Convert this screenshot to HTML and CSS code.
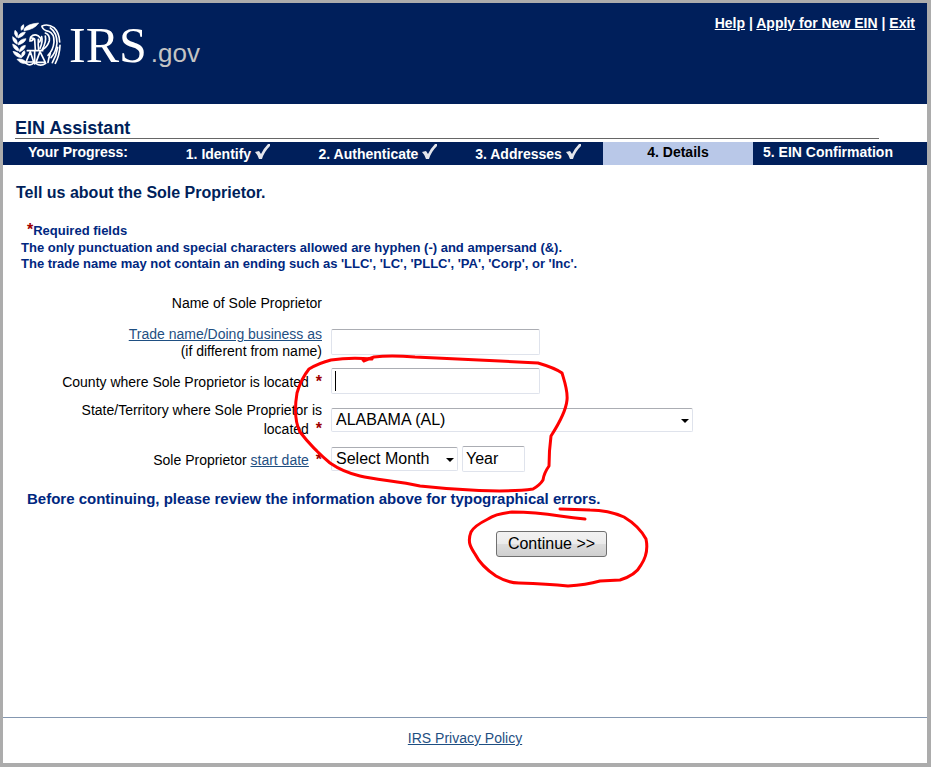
FILE: index.html
```html
<!DOCTYPE html>
<html lang="en">
<head>
  <meta charset="utf-8">
  <title>EIN Assistant</title>
  <link rel="stylesheet" href="styles.css">
</head>
<body>
  <header class="site-header">
    <a class="logo" href="#">
      <svg class="eagle" viewBox="36 66 150 135" aria-hidden="true">
        <g fill="#fff" stroke="#fff" stroke-width="2">
          <path d="M64 91 Q60 78 71 74 Q75 84 64 91Z"/>
          <path d="M72 88 Q80 72 116 69 Q104 88 72 92Z"/>
          <path d="M50 112 Q40 102 45 91 Q56 98 52 112Z"/>
          <path d="M54 112 Q58 97 76 96 Q72 109 54 114Z"/>
          <path d="M50 132 Q36 124 38 110 Q54 118 52 132Z"/>
          <path d="M54 133 Q58 117 78 116 Q75 129 54 135Z"/>
          <path d="M54 153 Q39 147 38 132 Q54 138 57 151Z"/>
          <path d="M58 154 Q60 138 76 136 Q77 147 58 156Z"/>
          <path d="M64 173 Q45 171 39 154 Q55 156 66 170Z"/>
          <path d="M65 170 Q63 157 73 152 Q80 161 65 172Z"/>
          <path d="M82 190 Q63 194 51 178 Q68 173 82 190Z"/>
        </g>
        <g fill="none" stroke="#fff" stroke-width="5" stroke-linecap="round" stroke-linejoin="round">
          <path d="M90 119 L92 111 Q102 101 114 107 L123 116 L119 126 M92 113 L102 116"/>
          <path d="M104 117 L106 150 M89 123 Q98 123 101 116 M115 118 Q114 134 116 150"/>
          <path d="M82 152 H128 M104 152 V192"/>
          <path d="M91 155 L78 186 H101 L91 155 M120 155 L108 187 H136 L120 155"/>
          <path d="M78 190 Q91 200 102 188 M107 190 Q122 201 137 190"/>
          <path d="M126 78 Q144 70 162 83 Q178 98 179 126"/>
          <path d="M126 80 Q130 91 146 94 Q163 101 162 126 Q160 150 144 166"/>
          <path d="M136 99 Q150 104 148 122 Q143 139 130 147 M151 84 Q171 98 171 129 Q168 157 153 173"/>
          <path d="M125 110 Q129 124 120 145 M136 108 Q140 125 126 150"/>
          <path d="M180 136 Q179 166 166 190 M173 142 Q169 168 157 188 M151 160 Q146 175 144 187"/>
        </g>
      </svg>
      <span class="logo-irs">IRS</span><span class="logo-gov">.gov</span>
    </a>
    <nav class="top-links">
      <a href="#">Help</a> | <a href="#">Apply for New EIN</a> | <a href="#">Exit</a>
    </nav>
  </header>

  <h1>EIN Assistant</h1>

  <ol class="progress">
    <li>Your Progress:</li>
    <li class="done">1. Identify <svg class="check" viewBox="0 0 15 16"><path d="M0 8 L4 7 L6 10 Q9 4 13 0 L15 0 L15 2 Q9 8 7 15 L4 15 Q3 11 0 8Z"/></svg></li>
    <li class="done">2. Authenticate <svg class="check" viewBox="0 0 15 16"><path d="M0 8 L4 7 L6 10 Q9 4 13 0 L15 0 L15 2 Q9 8 7 15 L4 15 Q3 11 0 8Z"/></svg></li>
    <li class="done">3. Addresses <svg class="check" viewBox="0 0 15 16"><path d="M0 8 L4 7 L6 10 Q9 4 13 0 L15 0 L15 2 Q9 8 7 15 L4 15 Q3 11 0 8Z"/></svg></li>
    <li class="current">4. Details</li>
    <li>5. EIN Confirmation</li>
  </ol>

  <main>
    <h2>Tell us about the Sole Proprietor.</h2>

    <div class="notes">
      <p class="required-note"><span class="req">*</span>Required fields</p>
      <p>The only punctuation and special characters allowed are hyphen (-) and ampersand (&amp;).</p>
      <p>The trade name may not contain an ending such as 'LLC', 'LC', 'PLLC', 'PA', 'Corp', or 'Inc'.</p>
    </div>

    <form>
      <div class="row">
        <span class="label">Name of Sole Proprietor</span>
      </div>
      <div class="row">
        <label class="label" for="trade"><a href="#">Trade name/Doing business as</a><br>(if different from name)</label>
        <input type="text" id="trade">
      </div>
      <div class="row">
        <label class="label" for="county">County where Sole Proprietor is located <span class="req">*</span></label>
        <div class="field">
          <input type="text" id="county">
          <span class="caret"></span>
        </div>
      </div>
      <div class="row">
        <label class="label" for="state">State/Territory where Sole Proprietor is located <span class="req">*</span></label>
        <div class="select state">
          <select id="state">
            <option>ALABAMA (AL)</option>
          </select>
          <svg class="arrow" viewBox="0 0 8 4"><path d="M0 0H8L4 4Z"/></svg>
        </div>
      </div>
      <div class="row">
        <label class="label" for="month">Sole Proprietor <a href="#">start date</a> <span class="req">*</span></label>
        <div class="date">
          <div class="select month">
            <select id="month">
              <option>Select Month</option>
            </select>
            <svg class="arrow" viewBox="0 0 8 4"><path d="M0 0H8L4 4Z"/></svg>
          </div>
          <input class="year" type="text" value="Year" aria-label="Year">
        </div>
      </div>

      <p class="review">Before continuing, please review the information above for typographical errors.</p>
      <button type="button">Continue &gt;&gt;</button>
    </form>

    <!-- hand-drawn marks over the form -->
    <svg class="marks" viewBox="3 165 700 460" aria-hidden="true">
      <path d="M363 360 L372 358 M364 361 Q368 359 374 357 Q390 355 415 357 L500 361 L538 363 Q555 368 562 373 C565 383 568 391 567 400 C566 411 560 422 551 436 Q549 451 549 466 Q544 473 543 480 Q540 485 533 489 C505 493 455 490 420 486 C398 481 376 480 360 476 Q343 472 330 463 C318 453 310 445 300 432 C294 420 295 405 297 393 Q301 379 309 369 Q319 363 331 360 Q350 357 372 359"/>
      <path d="M585 519 Q574 518 560 516 Q535 512 512 512 Q495 514 488 519 Q474 526 471 532 C467 542 471 548 475 554 Q481 566 496 576 Q508 583 519 583 Q548 584 568 586 Q586 585 600 581 L620 580 Q636 575 641 565 Q649 553 646 539 Q639 526 624 517 Q608 510 590 510 L560 509"/>
    </svg>
  </main>

  <footer>
    <a href="#">IRS Privacy Policy</a>
  </footer>
</body>
</html>
```

FILE: styles.css
```css
* {
  box-sizing: border-box;
}

body {
  margin: 0;
  min-height: 100vh;
  display: flex;
  flex-direction: column;
  border: 3px solid #acacac;
  border-right-width: 4px;
  border-bottom-width: 4px;
  background: #fff;
  color: #000;
  font-family: Arial, "Liberation Sans", sans-serif;
  font-size: 14px;
  line-height: 17px;
}

h1, h2, p, ol {
  margin: 0;
  padding: 0;
}

a {
  color: #1f4f82;
}

.site-header {
  display: flex;
  justify-content: space-between;
  align-items: flex-start;
  height: 101px;
  padding: 12px 12px 0 9px;
  background: #001f5b;
  color: #fff;
  font-weight: bold;
}

.site-header a {
  color: #fff;
}

.logo {
  display: flex;
  align-items: baseline;
  text-decoration: none;
  font-weight: normal;
}

.eagle {
  width: 50px;
  height: 45px;
  margin: 7px 7px 0 0;
  align-self: flex-start;
}

.logo-irs {
  font-family: "Liberation Serif", serif;
  font-size: 50px;
  line-height: 60px;
}

.logo-gov {
  margin-left: 4px;
  color: #c4c4c4;
  font-size: 26px;
}

h1 {
  margin: 14px 48px 3px 12px;
  border-bottom: 1px solid #666;
  color: #001f5b;
  font-size: 18px;
  line-height: 20px;
}

.progress {
  display: grid;
  grid-template-columns: repeat(6, 150px);
  height: 23px;
  padding-bottom: 2px;
  background: #001f5b;
  color: #fff;
  font-weight: bold;
  line-height: 21px;
  text-align: center;
  list-style: none;
}

.progress .done {
  display: flex;
  justify-content: center;
  gap: 4px;
  padding-top: 2px;
}

.progress .current {
  background: #b9c8e8;
  color: #000;
}

.check {
  width: 15px;
  height: 16px;
  fill: #e4e6ec;
}

main {
  position: relative;
  flex: 1;
}

h2 {
  margin: 18px 0 0 13px;
  color: #001f5b;
  font-size: 16px;
  line-height: 20px;
}

.notes {
  margin: 18px 0 0 18px;
  color: #002780;
  font-size: 13px;
  font-weight: bold;
  line-height: 16px;
}

.required-note {
  padding-left: 6px;
  line-height: 19px;
}

.req {
  color: #a00000;
  font-size: 16px;
  font-weight: bold;
  line-height: 16px;
}

.label .req {
  margin-left: 3px;
  line-height: 20px;
}

form {
  margin-top: 11px;
}

.row {
  display: grid;
  grid-template-columns: 279px 1fr;
  column-gap: 9px;
  align-items: center;
  min-height: 39px;
  padding-left: 40px;
}

.label {
  padding-top: 2px;
  text-align: right;
}

input, select {
  height: 26px;
  border: 1px solid #dfe3ec;
  border-top-color: #abadb3;
  border-radius: 2px;
  background: #fff;
  color: #000;
  font: 16px Arial, "Liberation Sans", sans-serif;
}

input {
  width: 209px;
  padding: 0 4px;
}

.field {
  position: relative;
}

.field input {
  display: block;
}

.caret {
  position: absolute;
  top: 3px;
  left: 4px;
  width: 1px;
  height: 20px;
  background: #000;
}

.select {
  position: relative;
}

select {
  display: block;
  width: 100%;
  height: 24px;
  padding: 0 4px;
  appearance: none;
}

.arrow {
  position: absolute;
  top: 11px;
  right: 4px;
  width: 8px;
  height: 4px;
  pointer-events: none;
}

.state {
  width: 362px;
}

.date {
  display: flex;
  align-items: center;
  gap: 4px;
}

.month {
  width: 127px;
}

.year {
  width: 63px;
  padding: 0 3px;
}

.review {
  margin: 12px 0 0 24px;
  color: #002780;
  font-size: 15px;
  font-weight: bold;
}

button {
  display: block;
  width: 111px;
  height: 26px;
  margin: 24px 0 0 493px;
  padding: 0;
  border: 1px solid #707070;
  border-radius: 3px;
  background: linear-gradient(#f2f2f2, #ebebeb 50%, #dddddd 50%, #cfcfcf);
  color: #000;
  font: 16px Arial, "Liberation Sans", sans-serif;
}

.marks {
  position: absolute;
  top: 0;
  left: 0;
  width: 700px;
  height: 460px;
  fill: none;
  stroke: #f00;
  stroke-width: 3;
  stroke-linecap: round;
  stroke-linejoin: round;
  pointer-events: none;
}

footer {
  height: 46px;
  padding-top: 12px;
  border-top: 1px solid #8497b0;
  text-align: center;
}
```
